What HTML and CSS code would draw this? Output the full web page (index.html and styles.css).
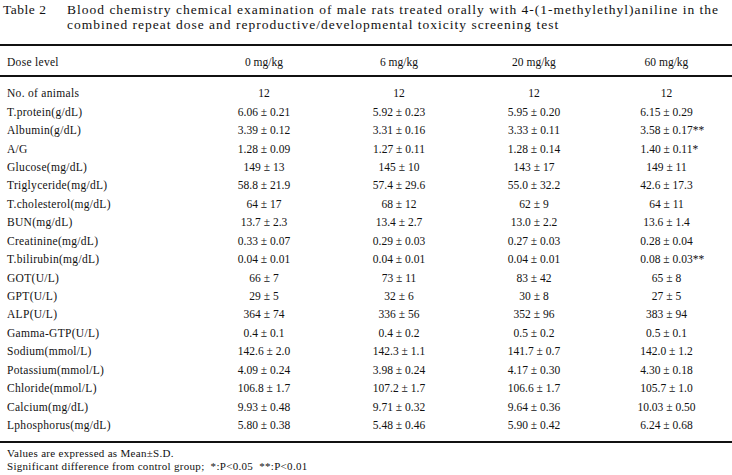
FILE: index.html
```html
<!DOCTYPE html>
<html>
<head>
<meta charset="utf-8">
<link rel="stylesheet" href="styles.css">
</head>
<body>
<div class="caption">
  <div class="num">Table 2</div>
  <div class="ttl">Blood chemistry chemical examination of male rats treated orally with 4-(1-methylethyl)aniline in the<br>combined repeat dose and reproductive/developmental toxicity screening test</div>
</div>
<table class="data">
  <colgroup>
    <col class="c-lbl"><col class="c-1"><col class="c-2"><col class="c-3"><col class="c-4">
  </colgroup>
  <thead>
    <tr><th class="lbl">Dose level</th><th>0 mg/kg</th><th>6 mg/kg</th><th>20 mg/kg</th><th>60 mg/kg</th></tr>
  </thead>
  <tbody>
    <tr><td class="lbl">No. of animals</td><td>12</td><td>12</td><td>12</td><td>12</td></tr>
    <tr><td class="lbl">T.protein(g/dL)</td><td>6.06 ± 0.21</td><td>5.92 ± 0.23</td><td>5.95 ± 0.20</td><td>6.15 ± 0.29</td></tr>
    <tr><td class="lbl">Albumin(g/dL)</td><td>3.39 ± 0.12</td><td>3.31 ± 0.16</td><td>3.33 ± 0.11</td><td>3.58 ± 0.17<span class="sig">**</span></td></tr>
    <tr><td class="lbl">A/G</td><td>1.28 ± 0.09</td><td>1.27 ± 0.11</td><td>1.28 ± 0.14</td><td>1.40 ± 0.11<span class="sig">*</span></td></tr>
    <tr><td class="lbl">Glucose(mg/dL)</td><td>149 ± 13</td><td>145 ± 10</td><td>143 ± 17</td><td>149 ± 11</td></tr>
    <tr><td class="lbl">Triglyceride(mg/dL)</td><td>58.8 ± 21.9</td><td>57.4 ± 29.6</td><td>55.0 ± 32.2</td><td>42.6 ± 17.3</td></tr>
    <tr><td class="lbl">T.cholesterol(mg/dL)</td><td>64 ± 17</td><td>68 ± 12</td><td>62 ± 9</td><td>64 ± 11</td></tr>
    <tr><td class="lbl">BUN(mg/dL)</td><td>13.7 ± 2.3</td><td>13.4 ± 2.7</td><td>13.0 ± 2.2</td><td>13.6 ± 1.4</td></tr>
    <tr><td class="lbl">Creatinine(mg/dL)</td><td>0.33 ± 0.07</td><td>0.29 ± 0.03</td><td>0.27 ± 0.03</td><td>0.28 ± 0.04</td></tr>
    <tr><td class="lbl">T.bilirubin(mg/dL)</td><td>0.04 ± 0.01</td><td>0.04 ± 0.01</td><td>0.04 ± 0.01</td><td>0.08 ± 0.03<span class="sig">**</span></td></tr>
    <tr><td class="lbl">GOT(U/L)</td><td>66 ± 7</td><td>73 ± 11</td><td>83 ± 42</td><td>65 ± 8</td></tr>
    <tr><td class="lbl">GPT(U/L)</td><td>29 ± 5</td><td>32 ± 6</td><td>30 ± 8</td><td>27 ± 5</td></tr>
    <tr><td class="lbl">ALP(U/L)</td><td>364 ± 74</td><td>336 ± 56</td><td>352 ± 96</td><td>383 ± 94</td></tr>
    <tr><td class="lbl">Gamma-GTP(U/L)</td><td>0.4 ± 0.1</td><td>0.4 ± 0.2</td><td>0.5 ± 0.2</td><td>0.5 ± 0.1</td></tr>
    <tr><td class="lbl">Sodium(mmol/L)</td><td>142.6 ± 2.0</td><td>142.3 ± 1.1</td><td>141.7 ± 0.7</td><td>142.0 ± 1.2</td></tr>
    <tr><td class="lbl">Potassium(mmol/L)</td><td>4.09 ± 0.24</td><td>3.98 ± 0.24</td><td>4.17 ± 0.30</td><td>4.30 ± 0.18</td></tr>
    <tr><td class="lbl">Chloride(mmol/L)</td><td>106.8 ± 1.7</td><td>107.2 ± 1.7</td><td>106.6 ± 1.7</td><td>105.7 ± 1.0</td></tr>
    <tr><td class="lbl">Calcium(mg/dL)</td><td>9.93 ± 0.48</td><td>9.71 ± 0.32</td><td>9.64 ± 0.36</td><td>10.03 ± 0.50</td></tr>
    <tr><td class="lbl">Lphosphorus(mg/dL)</td><td>5.80 ± 0.38</td><td>5.48 ± 0.46</td><td>5.90 ± 0.42</td><td>6.24 ± 0.68</td></tr>
  </tbody>
</table>
<div class="notes">
  <div>Values are expressed as Mean±S.D.</div>
  <div>Significant difference from control group;&nbsp; *:P&lt;0.05&nbsp; **:P&lt;0.01</div>
</div>
</body>
</html>
```
FILE: styles.css
```css
html, body {
  margin: 0;
  padding: 0;
  background: #fff;
}
body {
  width: 732px;
  font-family: "Liberation Serif", "Times New Roman", serif;
  color: #111;
}
.caption {
  display: flex;
  padding: 2px 0 0 3px;
  font-size: 13.5px;
  line-height: 15px;
  height: 42px;
}
.num {
  width: 64px;
  flex: none;
  letter-spacing: 0.5px;
}
.ttl {
  white-space: nowrap;
  letter-spacing: 1px;
}
.data {
  width: 732px;
  border-collapse: collapse;
  table-layout: fixed;
  font-size: 11.5px;
}
.c-lbl { width: 197px; }
.c-1 { width: 134px; }
.c-2 { width: 136px; }
.c-3 { width: 134px; }
.c-4 { width: 131px; }
.data thead tr {
  border-top: 2px solid #111;
  border-bottom: 2px solid #111;
}
.data th {
  font-weight: normal;
  height: 27px;
  padding: 2px 0 0 0;
  text-align: center;
}
.data th.lbl, .data td.lbl {
  text-align: left;
  padding-left: 7px;
  letter-spacing: 0.3px;
}
.data td {
  height: 18.45px;
  padding: 0;
  text-align: center;
  white-space: nowrap;
}
.data tbody tr:first-child td {
  padding-top: 7px;
}
.data tbody tr:last-child td {
  padding-bottom: 7px;
}
.data tbody tr:last-child {
  border-bottom: 2px solid #111;
}
.sig {
  display: inline-block;
  width: 0;
  overflow: visible;
  white-space: nowrap;
  text-align: left;
}
.notes {
  padding: 4px 0 0 7px;
  font-size: 11px;
  line-height: 13px;
  letter-spacing: 0.3px;
}
```
